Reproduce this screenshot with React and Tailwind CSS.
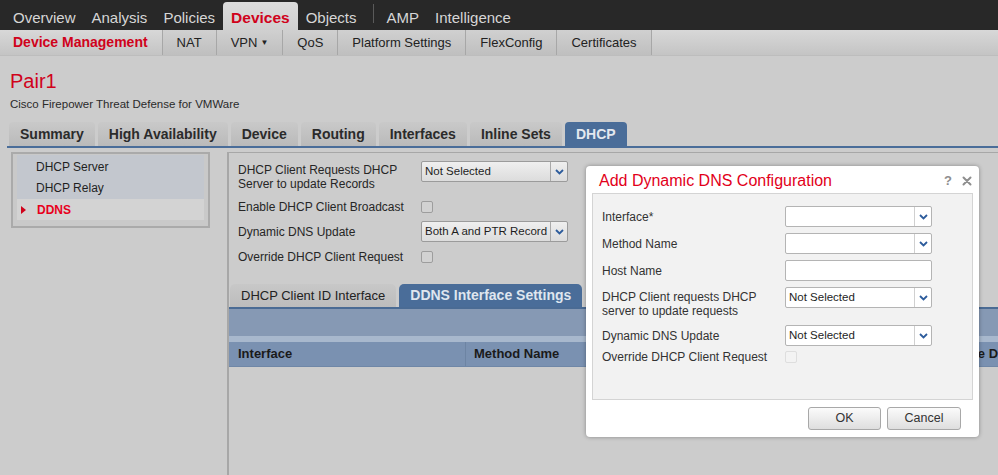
import React from 'react';

// Cisco FMC - Devices > DHCP > DDNS with the "Add Dynamic DNS Configuration" dialog open

const Chevron = () => (
  <svg width="9" height="6" viewBox="0 0 9 6">
    <path d="M1 1l3.5 3.5L8 1" fill="none" stroke="#2d5c9c" strokeWidth="1.8" />
  </svg>
);

const Select = ({ value, modal }) => (
  <div
    className={`flex h-[21px] w-[147px] shrink-0 rounded-[2px] border ${
      modal ? 'border-[#b4b4b4] bg-white' : 'border-[#9b9b9b] bg-gradient-to-b from-[#efefef] to-[#dcdcdc]'
    }`}
  >
    <div className="flex-1 overflow-hidden whitespace-nowrap pl-[3px] text-[11.5px] leading-[19px] text-[#1e1e1e]">{value}</div>
    <div className={`flex w-[17px] items-center justify-center border-l ${modal ? 'border-[#d0d0d0]' : 'border-[#a9a9a9]'}`}>
      <Chevron />
    </div>
  </div>
);

const Checkbox = ({ disabled }) => (
  <div
    className={`h-[12px] w-[12px] rounded-[2px] border ${
      disabled ? 'border-[#dedede] bg-[#f3f3f3]' : 'border-[#9d9d9d] bg-[#d2d2d2]'
    }`}
  />
);

const topItems = ['Overview', 'Analysis', 'Policies'];
const subTabs = ['NAT', 'VPN', 'QoS', 'Platform Settings', 'FlexConfig', 'Certificates'];
const tabs = ['Summary', 'High Availability', 'Device', 'Routing', 'Interfaces', 'Inline Sets'];

export default function App() {
  return (
    <div className="relative flex h-[475px] w-[998px] flex-col overflow-hidden bg-[#cccccc] font-['Liberation_Sans',Arial,sans-serif] text-[#262626]">
      {/* top navigation */}
      <div className="flex h-[30px] shrink-0 items-end bg-[#282828] pl-[5px] text-[15px] text-[#d6d6d6]">
        {topItems.map((t) => (
          <div key={t} className="h-[28px] px-2 pt-[4px] leading-[24px]">{t}</div>
        ))}
        <div className="h-[28px] rounded-t-[4px] bg-gradient-to-b from-[#dcdcdc] to-[#cfcfcf] px-2 pt-[4px] text-[15.5px] font-bold leading-[24px] text-[#d0021b]">
          Devices
        </div>
        <div className="h-[28px] px-2 pt-[4px] leading-[24px]">Objects</div>
        <div className="mb-[3px] ml-[8px] h-[19px] w-px self-center bg-[#5a5a5a]" />
        <div className="ml-[5px] h-[28px] px-2 pt-[4px] leading-[24px]">AMP</div>
        <div className="h-[28px] px-2 pt-[4px] leading-[24px]">Intelligence</div>
      </div>

      {/* second navigation */}
      <div className="flex h-[26px] shrink-0 items-stretch border-b border-[#bdbdbd] bg-gradient-to-b from-[#d8d8d8] to-[#c4c4c4] text-[13px] text-[#222]">
        <div className="flex items-center pl-[13px] pr-[14px] text-[14px] font-bold text-[#d0021b]">Device Management</div>
        {subTabs.map((t) => (
          <div key={t} className="flex items-center border-l border-[#a7a7a7] bg-gradient-to-b from-[#d0d0d0] to-[#bfbfbf] px-[14px]">
            {t}
            {t === 'VPN' && <span className="ml-[3px] text-[8px]">▼</span>}
          </div>
        ))}
        <div className="flex-1 border-l border-[#a7a7a7]" />
      </div>

      {/* device heading */}
      <div className="shrink-0 px-[10px] pt-[13px]">
        <div className="text-[20px] leading-[24px] text-[#d0021b]">Pair1</div>
        <div className="mt-[4px] text-[11.5px] leading-[14px] text-[#2a2a2a]">Cisco Firepower Threat Defense for VMWare</div>
      </div>

      {/* device tabs */}
      <div className="mt-[11px] flex h-[24px] shrink-0 items-stretch gap-[3px] pl-[9px] text-[14px] font-bold">
        {tabs.map((t) => (
          <div key={t} className="flex items-center rounded-t-[4px] bg-gradient-to-b from-[#c9c9c9] to-[#bababa] px-[11px] text-[#2b2b2b]">
            {t}
          </div>
        ))}
        <div className="flex items-center rounded-t-[4px] bg-[#4a6d99] px-[11px] text-[#e3e8ef]">DHCP</div>
      </div>
      <div className="ml-[7px] h-[2px] shrink-0 bg-[#4a6d99]" />

      {/* body */}
      <div className="mt-[4px] flex flex-1 items-start">
        {/* left menu */}
        <div className="ml-[11px] w-[199px] shrink-0 border-2 border-[#aaaaaa] bg-[#c9c9c9] px-[4px] pb-[6px] pt-[1px] text-[12px]">
          <div className="bg-[#c3c7ce] pt-[2px]">
            <div className="h-[21px] pl-[19px] leading-[21px] text-[#1f1f1f]">DHCP Server</div>
            <div className="h-[21px] pl-[19px] leading-[21px] text-[#1f1f1f]">DHCP Relay</div>
          </div>
          <div className="flex h-[21px] items-center bg-[#d3d3d3]">
            <div className="ml-[4px] h-0 w-0 border-y-[4px] border-l-[5px] border-y-transparent border-l-[#d0021b]" />
            <div className="ml-[11px] font-bold text-[#e8001c]">DDNS</div>
          </div>
        </div>

        {/* main panel */}
        <div className="ml-[17px] flex h-full flex-1 flex-col border-l-2 border-t border-[#a7a7a7] text-[12px]">
          <div className="pl-[9px] pt-[8px]">
            <div className="flex">
              <div className="w-[183px] pt-[2px] leading-[14px]">
                DHCP Client Requests DHCP
                <br />
                Server to update Records
              </div>
              <Select value="Not Selected" />
            </div>
            <div className="mt-[4px] flex h-[24px] items-center">
              <div className="w-[183px]">Enable DHCP Client Broadcast</div>
              <Checkbox />
            </div>
            <div className="mt-[2px] flex h-[21px] items-center">
              <div className="w-[183px]">Dynamic DNS Update</div>
              <Select value="Both A and PTR Record" />
            </div>
            <div className="mt-[3px] flex h-[24px] items-center">
              <div className="w-[183px]">Override DHCP Client Request</div>
              <Checkbox />
            </div>
          </div>

          {/* sub tabs */}
          <div className="ml-[1px] mt-[15px] flex h-[23px] items-stretch gap-[3px]">
            <div className="flex items-center rounded-t-[5px] bg-gradient-to-b from-[#c8c8c8] to-[#bcbcbc] px-[11px] text-[13px] text-[#222]">
              DHCP Client ID Interface
            </div>
            <div className="flex items-center rounded-t-[5px] bg-[#4a6d99] px-[11px] text-[14px] font-bold text-[#dfe6ef]">
              DDNS Interface Settings
            </div>
          </div>
          <div className="h-[2px] bg-[#4a6b94]" />
          <div className="h-[27px] bg-[#8699b4]" />
          <div className="h-[6px] bg-[#a8b8cd]" />
          <div className="flex h-[25px] items-center border-b border-[#6f87a7] bg-[#7a91b1] text-[13px] font-bold text-[#1a1a1a]">
            <div className="flex h-full w-[237px] items-center border-r border-[#6d84a3] pl-[9px]">Interface</div>
            <div className="flex h-full w-[247px] items-center border-r border-[#6d84a3] pl-[8px]">Method Name</div>
            <div className="h-full w-[219px] border-r border-[#6d84a3]" />
            <div className="flex h-full flex-1 items-center overflow-hidden whitespace-nowrap pl-[9px]">Update D</div>
          </div>
        </div>
      </div>

      {/* dialog */}
      <div className="absolute left-[586px] top-[166px] flex h-[271px] w-[393px] flex-col rounded-[4px] bg-white shadow-[0_0_4px_rgba(0,0,0,0.35)]">
        <div className="flex h-[27px] items-center pl-[13px] pr-[7px] pt-[3px]">
          <div className="flex-1 text-[16px] text-[#e2001a]">Add Dynamic DNS Configuration</div>
          <div className="text-[13px] font-bold text-[#8e8e8e]">?</div>
          <svg className="ml-[10px]" width="10" height="10" viewBox="0 0 10 10">
            <path d="M1.5 1.5l7 7M8.5 1.5l-7 7" stroke="#8e8e8e" strokeWidth="2" strokeLinecap="round" />
          </svg>
        </div>
        <div className="mx-[6px] h-[207px] border border-[#d4d4d4] bg-[#f2f2f2] pl-[9px] pt-[12px] text-[12px] text-[#333]">
          <div className="flex h-[21px] items-center">
            <div className="w-[183px]">Interface*</div>
            <Select value="" modal />
          </div>
          <div className="mt-[6px] flex h-[21px] items-center">
            <div className="w-[183px]">Method Name</div>
            <Select value="" modal />
          </div>
          <div className="mt-[6px] flex h-[21px] items-center">
            <div className="w-[183px]">Host Name</div>
            <div className="h-[21px] w-[147px] rounded-[2px] border border-[#b4b4b4] bg-white" />
          </div>
          <div className="mt-[6px] flex">
            <div className="w-[183px] pt-[3px] leading-[14px]">
              DHCP Client requests DHCP
              <br />
              server to update requests
            </div>
            <Select value="Not Selected" modal />
          </div>
          <div className="mt-[7px] flex h-[21px] items-center">
            <div className="w-[183px]">Dynamic DNS Update</div>
            <Select value="Not Selected" modal />
          </div>
          <div className="mt-[3px] flex h-[16px] items-center">
            <div className="w-[183px]">Override DHCP Client Request</div>
            <Checkbox disabled />
          </div>
        </div>
        <div className="mt-[7px] flex justify-end gap-[6px] pr-[18px] text-[12.5px] text-[#333]">
          <div className="flex h-[23px] w-[73px] items-center justify-center rounded-[3px] border border-[#a8a8a8] bg-gradient-to-b from-[#fbfbfb] to-[#dedede]">OK</div>
          <div className="flex h-[23px] w-[74px] items-center justify-center rounded-[3px] border border-[#a8a8a8] bg-gradient-to-b from-[#fbfbfb] to-[#dedede]">Cancel</div>
        </div>
      </div>
    </div>
  );
}
